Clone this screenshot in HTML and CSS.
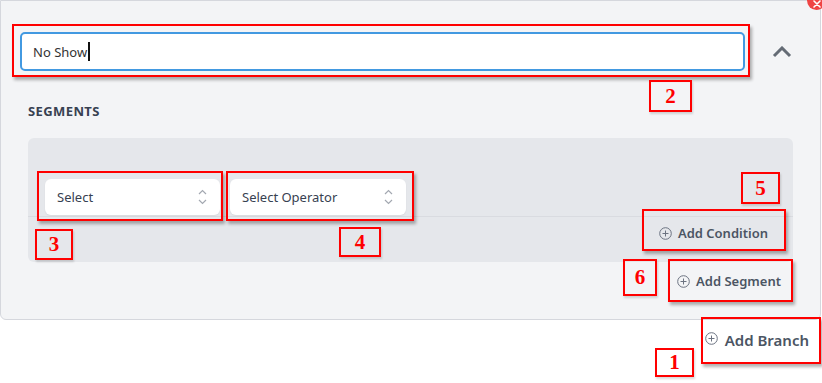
FILE: index.html
```html
<!DOCTYPE html>
<html lang="en">
<head>
    <meta charset="UTF-8">
    <title>Branches</title>
    <link rel="stylesheet" href="styles.css">
</head>
<body>

<div id="page">
    <div class="branch">
        <span class="close">
            <svg width="8" height="8" viewBox="0 0 8 8"><path d="M1 1L7 7M7 1L1 7" stroke="#fff" stroke-width="1.6" stroke-linecap="round"/></svg>
        </span>
        <div class="branch-head">
            <div class="name-input">No Show<span class="caret"></span></div>
            <div class="toggle">
                <svg width="20" height="12" viewBox="0 0 20 12"><path d="M2 10L10 2L18 10" fill="none" stroke="#646b75" stroke-width="3"/></svg>
            </div>
        </div>

        <h4 class="section-title">Segments</h4>

        <div class="segment">
            <div class="condition">
                <div class="select">
                    <span>Select</span>
                    <svg class="updown" width="9" height="16" viewBox="0 0 9 16"><path d="M1 5L4.5 1.5L8 5M1 11L4.5 14.5L8 11" fill="none" stroke="#a3a8b1" stroke-width="1.2"/></svg>
                </div>
                <div class="select">
                    <span>Select Operator</span>
                    <svg class="updown" width="9" height="16" viewBox="0 0 9 16"><path d="M1 5L4.5 1.5L8 5M1 11L4.5 14.5L8 11" fill="none" stroke="#a3a8b1" stroke-width="1.2"/></svg>
                </div>
            </div>
            <div class="segment-actions">
                <a class="add-link" href="#">
                    <svg width="13" height="13" viewBox="0 0 13 13"><circle cx="6.5" cy="6.5" r="5.8" fill="none" stroke="#6b7280" stroke-width="1"/><path d="M6.5 3.5V9.5M3.5 6.5H9.5" stroke="#6b7280" stroke-width="1"/></svg>
                    Add Condition
                </a>
            </div>
        </div>

        <div class="branch-actions">
            <a class="add-link" href="#">
                <svg width="13" height="13" viewBox="0 0 13 13"><circle cx="6.5" cy="6.5" r="5.8" fill="none" stroke="#6b7280" stroke-width="1"/><path d="M6.5 3.5V9.5M3.5 6.5H9.5" stroke="#6b7280" stroke-width="1"/></svg>
                Add Segment
            </a>
        </div>
    </div>

    <div class="page-actions">
        <a class="add-link big" href="#">
            <svg width="13" height="13" viewBox="0 0 13 13"><circle cx="6.5" cy="6.5" r="5.8" fill="none" stroke="#6b7280" stroke-width="1"/><path d="M6.5 3.5V9.5M3.5 6.5H9.5" stroke="#6b7280" stroke-width="1"/></svg>
            Add Branch
        </a>
    </div>

    <!-- annotation marks -->
    <div class="mark mark-name"></div>
    <div class="mark mark-field"></div>
    <div class="mark mark-operator"></div>
    <div class="mark mark-condition"></div>
    <div class="mark mark-segment"></div>
    <div class="mark mark-branch"></div>

    <div class="tag tag-1">1</div>
    <div class="tag tag-2">2</div>
    <div class="tag tag-3">3</div>
    <div class="tag tag-4">4</div>
    <div class="tag tag-5">5</div>
    <div class="tag tag-6">6</div>
</div>

</body>
</html>
```

FILE: styles.css
```css
*{
    margin: 0;
    padding: 0;
    box-sizing: border-box;
}
a{
    text-decoration: none;
}
body{
    font-family: "Noto Sans", "Open Sans", sans-serif;
    font-size: 13px;
    color: #374151;
    background: #fff;
    overflow: hidden;
}

#page{
    width: 822px;
    height: 383px;
    position: relative;
}

.branch{
    width: 821px;
    background: #f3f4f6;
    border: 1px solid #d5d7dd;
    border-radius: 0 0 6px 6px;
    padding-top: 31px;
    position: relative;
}
.close{
    position: absolute;
    top: -10px;
    right: -6px;
    width: 19px;
    height: 19px;
    border-radius: 50%;
    background: #ef4444;
    display: flex;
    align-items: flex-end;
    justify-content: center;
    padding-bottom: 2px;
}

.branch-head{
    display: flex;
    align-items: center;
    padding-left: 19px;
}
.name-input{
    width: 725px;
    height: 39px;
    background: #fff;
    border: 2px solid #4299e1;
    border-radius: 5px;
    padding-left: 11px;
    display: flex;
    align-items: center;
    color: #333;
}
.caret{
    display: inline-block;
    width: 2px;
    height: 19px;
    background: #111;
    margin-left: 1px;
}
.toggle{
    flex: 1;
    display: flex;
    justify-content: center;
    padding-right: 2px;
}

.section-title{
    margin: 31px 0 0 27px;
    font-size: 13px;
    line-height: 18px;
    font-weight: 700;
    text-transform: uppercase;
    letter-spacing: 0.4px;
    color: #374151;
}

.segment{
    margin: 18px 27px 0;
    background: #e5e7eb;
    border-radius: 6px;
    padding-top: 41px;
}
.condition{
    display: flex;
    gap: 10px;
    padding: 0 0 1px 17px;
    border-bottom: 1px solid #d9dbe0;
}
.select{
    width: 175px;
    height: 36px;
    background: #fff;
    border-radius: 6px;
    box-shadow: 0 1px 2px rgba(0, 0, 0, 0.06);
    display: flex;
    align-items: center;
    justify-content: space-between;
    padding: 0 13px 0 12px;
    color: #374151;
}
.select + .select{
    width: 176px;
}

.segment-actions{
    display: flex;
    justify-content: flex-end;
    padding: 8px 25px 21px 0;
}
.branch-actions{
    display: flex;
    justify-content: flex-end;
    padding: 11px 39px 30px 0;
}
.page-actions{
    display: flex;
    justify-content: flex-end;
    padding: 10px 13px 0 0;
}

.add-link{
    display: flex;
    align-items: center;
    gap: 6px;
    line-height: 16px;
    font-weight: 600;
    color: #4b5563;
}
.add-link.big{
    font-size: 15px;
    line-height: 20px;
    gap: 7px;
}
.add-link.big svg{
    margin-top: -4px;
}

/* annotation marks */
.mark{
    position: absolute;
    border: 2px solid #ff0000;
    box-shadow: 2px 3px 3px rgba(0, 0, 0, 0.3);
}
.mark-name{ left: 12px; top: 24px; width: 738px; height: 53px; }
.mark-field{ left: 37px; top: 171px; width: 186px; height: 50px; }
.mark-operator{ left: 226px; top: 171px; width: 188px; height: 50px; }
.mark-condition{ left: 642px; top: 209px; width: 144px; height: 42px; }
.mark-segment{ left: 668px; top: 259px; width: 125px; height: 43px; }
.mark-branch{ left: 701px; top: 317px; width: 120px; height: 47px; }

.tag{
    position: absolute;
    border: 2px solid #ff0000;
    color: #ff0000;
    font-family: "Liberation Serif", serif;
    font-weight: 700;
    font-size: 21px;
    display: flex;
    align-items: center;
    justify-content: center;
    box-shadow: 1px 2px 2px rgba(0, 0, 0, 0.15);
}
.tag-1{ left: 655px; top: 348px; width: 39px; height: 29px; }
.tag-2{ left: 649px; top: 80px; width: 43px; height: 32px; }
.tag-3{ left: 35px; top: 229px; width: 38px; height: 31px; }
.tag-4{ left: 339px; top: 227px; width: 42px; height: 30px; }
.tag-5{ left: 741px; top: 172px; width: 39px; height: 32px; }
.tag-6{ left: 623px; top: 259px; width: 34px; height: 37px; }
```
